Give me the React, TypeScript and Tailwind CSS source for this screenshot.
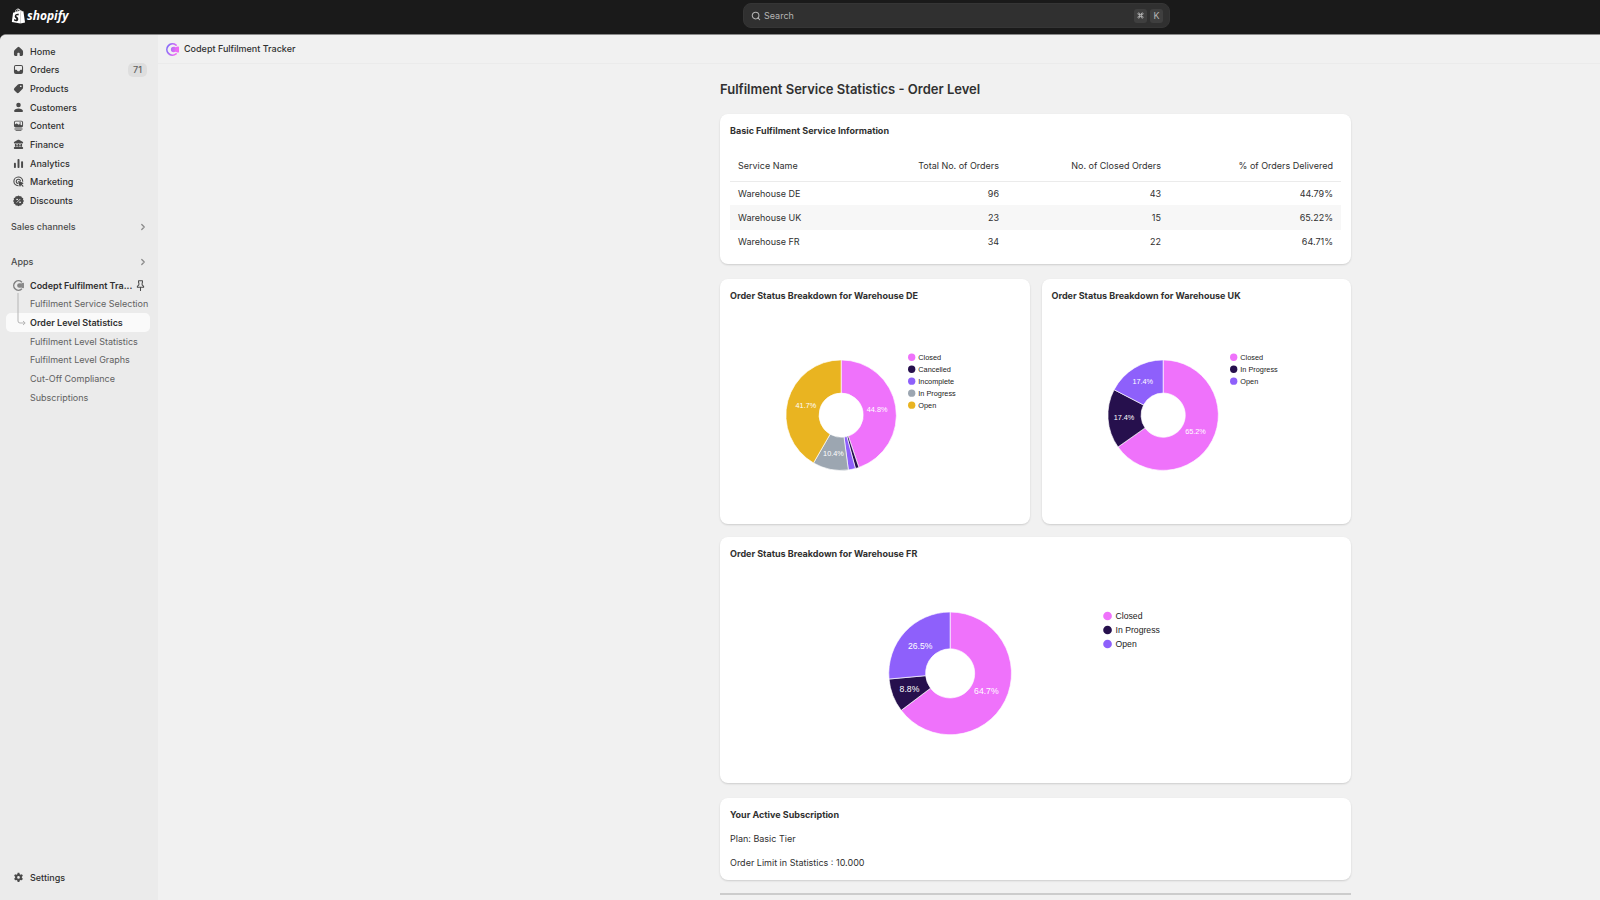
import type { ReactNode } from "react";
import { ChevronRight, Command, Search } from "lucide-react";
import { SiShopify } from "react-icons/si";

type Slice = { label: string; value: number; color: string };

const PINK = "#ef72fb";
const DARK = "#26104d";
const PURPLE = "#8e60fb";
const GREY = "#9ca6b1";
const YELLOW = "#e9b421";

const warehouses = [
  { name: "Warehouse DE", total: 96, closed: 43, delivered: "44.79%" },
  { name: "Warehouse UK", total: 23, closed: 15, delivered: "65.22%" },
  { name: "Warehouse FR", total: 34, closed: 22, delivered: "64.71%" },
];

const deSlices: Slice[] = [
  { label: "Closed", value: 43, color: PINK },
  { label: "Cancelled", value: 1, color: DARK },
  { label: "Incomplete", value: 2, color: PURPLE },
  { label: "In Progress", value: 10, color: GREY },
  { label: "Open", value: 40, color: YELLOW },
];

const ukSlices: Slice[] = [
  { label: "Closed", value: 15, color: PINK },
  { label: "In Progress", value: 4, color: DARK },
  { label: "Open", value: 4, color: PURPLE },
];

const frSlices: Slice[] = [
  { label: "Closed", value: 22, color: PINK },
  { label: "In Progress", value: 3, color: DARK },
  { label: "Open", value: 9, color: PURPLE },
];

function Glyph({ children }: { children: ReactNode }) {
  return (
    <svg
      viewBox="0 0 20 20"
      className="h-[13px] w-[13px] shrink-0 text-[#4a4a4a]"
      fill="currentColor"
      fillRule="evenodd"
      aria-hidden="true"
    >
      {children}
    </svg>
  );
}

const navItems = [
  {
    label: "Home",
    icon: (
      <path d="M8.600 3.400a2 2 0 0 1 2.800 0l4.500 4.300c.7.7 1.100 1.600 1.100 2.600v4.400c0 1.200-.9 2.100-2.100 2.100h-2.200a.9.9 0 0 1-.9-.9v-2.700c0-.7-.5-1.200-1.200-1.200h-1.200c-.7 0-1.200.5-1.200 1.200v2.700a.9.9 0 0 1-.9.9h-2.200c-1.200 0-2.100-.9-2.100-2.100v-4.400c0-1 .4-1.900 1.100-2.600z" />
    ),
  },
  {
    label: "Orders",
    badge: "71",
    icon: (
      <path d="M6 3h8a3 3 0 0 1 3 3v8a3 3 0 0 1-3 3H6a3 3 0 0 1-3-3V6a3 3 0 0 1 3-3zm.2 1.600c-1 0-1.600.6-1.600 1.600v4.300h2c.6 0 1 .3 1.200.8l.3.700c.2.4.5.6.9.6h2c.4 0 .7-.2.9-.6l.3-.7c.2-.5.6-.8 1.200-.8h2V6.200c0-1-.6-1.600-1.600-1.600z" />
    ),
  },
  {
    label: "Products",
    icon: (
      <path d="M11.200 3h4.300c.9 0 1.500.6 1.500 1.500v4.300c0 .8-.3 1.500-.9 2.100l-5.300 5.300a2.700 2.700 0 0 1-3.800 0l-3.200-3.200a2.700 2.700 0 0 1 0-3.800l5.300-5.300c.6-.6 1.300-.9 2.100-.9zM13.500 7.800a1.300 1.300 0 1 0 0-2.600 1.300 1.300 0 0 0 0 2.600z" />
    ),
  },
  {
    label: "Customers",
    icon: (
      <>
        <circle cx="10" cy="6.200" r="3.500" />
        <path d="M10 11.500c3.700 0 6.800 1.700 6.800 4 0 .9-.6 1.500-1.500 1.500H4.700c-.9 0-1.500-.6-1.500-1.500 0-2.300 3.100-4 6.800-4z" />
      </>
    ),
  },
  {
    label: "Content",
    icon: (
      <>
        <path d="M5.500 2.500h9A2.500 2.500 0 0 1 17 5v5.500a2.500 2.500 0 0 1-2.500 2.500h-9A2.500 2.500 0 0 1 3 10.500V5a2.500 2.500 0 0 1 2.500-2.500zm0 1.500c-.6 0-1 .4-1 1v3.500l2-1.500c.4-.3.8-.3 1.200 0l2.500 2 1.300-1c.4-.3.8-.3 1.200 0l2.800 2V5c0-.6-.4-1-1-1z" />
        <circle cx="12.500" cy="6.200" r="1.200" />
        <path d="M3.800 14.500h12.400V16H3.800zM5.500 16.800h9V18h-9z" />
      </>
    ),
  },
  {
    label: "Finance",
    icon: (
      <path d="M9.200 2.800a1.700 1.700 0 0 1 1.600 0l5.500 2.900c.6.300.9.800.9 1.400 0 .8-.6 1.400-1.400 1.400H4.200c-.8 0-1.400-.6-1.400-1.400 0-.6.300-1.100.9-1.400zM4.500 9.200h2.200v4.300H4.500zm4.400 0h2.200v4.300H8.900zm4.400 0h2.200v4.300h-2.200zM7 10.200h1.500V13H7zm4.500 0H13V13h-1.500zM4 14h12c.7 0 1.200.6 1.200 1.500S16.700 17 16 17H4c-.7 0-1.200-.6-1.200-1.500S3.300 14 4 14z" />
    ),
  },
  {
    label: "Analytics",
    icon: (
      <>
        <rect x="3" y="9" width="3" height="8" rx="1.200" />
        <rect x="8.500" y="3" width="3" height="14" rx="1.200" />
        <rect x="14" y="6.500" width="3" height="10.500" rx="1.200" />
      </>
    ),
  },
  {
    label: "Marketing",
    icon: (
      <>
        <path
          d="M16.500 9.500A6.800 6.800 0 1 0 9.500 16.600M13 9.200a3.300 3.300 0 1 0-3.800 3.900"
          fill="none"
          stroke="currentColor"
          strokeWidth="1.700"
          strokeLinecap="round"
        />
        <path d="M9.500 10.300c-.2-.6.3-1.100.9-.9l6.600 2.400c.7.300.7 1.200.1 1.500l-1.900.9 2.200 2.200c.8.900-.5 2.100-1.300 1.300L13.900 15.500l-.9 1.800c-.3.700-1.200.6-1.500-.1z" />
      </>
    ),
  },
  {
    label: "Discounts",
    icon: (
      <>
        <path d="M10 2.200l1.900 1.400 2.300-.3.900 2.200 2.200.9-.3 2.300L18.400 10.600 17 12.500l.3 2.200-2.200.9-.9 2.200-2.300-.3L10 18.800l-1.900-1.300-2.300.3-.9-2.200-2.200-.9.300-2.200-1.400-1.900L3 8.700l-.3-2.300 2.200-.9.9-2.200 2.300.3z" />
        <g stroke="#ebebeb" fill="none" strokeWidth="1.300" strokeLinecap="round">
          <path d="M7.600 12.900l4.800-4.800" />
          <circle cx="7.800" cy="8.300" r="0.700" />
          <circle cx="12.200" cy="12.700" r="0.700" />
        </g>
      </>
    ),
  },
];

const appPages = [
  "Fulfilment Service Selection",
  "Order Level Statistics",
  "Fulfilment Level Statistics",
  "Fulfilment Level Graphs",
  "Cut-Off Compliance",
  "Subscriptions",
];

function CodeptMark({ id, from, to, className }: { id: string; from: string; to: string; className: string }) {
  return (
    <svg viewBox="0 0 20 20" className={className} aria-hidden="true">
      <defs>
        <linearGradient id={id} x1="0" y1="0" x2="20" y2="6" gradientUnits="userSpaceOnUse">
          <stop offset="0.200" stopColor={from} />
          <stop offset="0.900" stopColor={to} />
        </linearGradient>
      </defs>
      <path
        d="M15.500 3.400A8.600 8.600 0 1 0 15.500 16.600"
        fill="none"
        stroke={`url(#${id})`}
        strokeWidth="2.600"
        strokeLinecap="round"
      />
      <path
        d="M19 5.200c.6 0 1 .4 1 1v7.600c0 .6-.4 1-1 1-1.900 0-3-.5-4.100-1.300-1.200.5-2.100.7-3.200.7a4.200 4.200 0 0 1 0-8.400c1.100 0 2 .2 3.200.7 1.100-.8 2.200-1.300 4.100-1.300z"
        fill={`url(#${id})`}
      />
    </svg>
  );
}

function Sidebar() {
  return (
    <aside className="flex w-[158px] shrink-0 flex-col rounded-tl-md bg-[#ebebeb] pb-[13px] pl-1.5 pr-2 pt-[7px] text-[9px] text-[#303030]">
      <nav className="grid h-[168px] auto-rows-fr">
        {navItems.map((item) => (
          <a key={item.label} href="#" className="flex items-center pl-1.5 pr-[3px] font-medium">
            <Glyph>{item.icon}</Glyph>
            <span className="ml-[5px] flex-1">{item.label}</span>
            {item.badge && (
              <span className="rounded-[5px] bg-[#dedede] px-[5px] leading-[14px] text-[#616161]">
                {item.badge}
              </span>
            )}
          </a>
        ))}
      </nav>

      <button type="button" className="mt-2 flex h-[18px] items-center justify-between pl-[5px] pr-0.5 font-medium text-[#4a4a4a]">
        Sales channels
        <ChevronRight className="h-[10px] w-[10px] text-[#8a8a8a]" strokeWidth={3} />
      </button>
      <button type="button" className="mt-[17px] flex h-[18px] items-center justify-between pl-[5px] pr-0.5 font-medium text-[#4a4a4a]">
        Apps
        <ChevronRight className="h-[10px] w-[10px] text-[#8a8a8a]" strokeWidth={3} />
      </button>

      <nav className="relative mt-[5px] grid h-[131px] auto-rows-fr">
        <a href="#" className="flex items-center pl-[7px] pr-[3px] font-semibold">
          <CodeptMark id="mark-side" from="#7c7c7c" to="#8a8a8a" className="h-[11px] w-[11px] shrink-0" />
          <span className="ml-1.5 flex-1 whitespace-nowrap">Codept Fulfilment Tra...</span>
          <svg
            viewBox="0 0 20 20"
            className="h-[13px] w-[13px] shrink-0"
            fill="none"
            stroke="#4a4a4a"
            strokeWidth="1.600"
            strokeLinejoin="round"
            strokeLinecap="round"
            aria-label="Pinned"
          >
            <path d="M7 2.800h6v2.500l-.5 1v2.700l2.300 2.200v1.600H5.200v-1.600l2.300-2.200V6.300l-.5-1zM10 13v4.500" />
          </svg>
        </a>
        {appPages.map((page) => {
          const active = page === "Order Level Statistics";
          return (
            <a
              key={page}
              href="#"
              aria-current={active ? "page" : undefined}
              className={
                active
                  ? "flex items-center rounded-[5px] bg-[#fafafa] pl-6 font-semibold"
                  : "flex items-center whitespace-nowrap pl-6 text-[#616161]"
              }
            >
              {page}
            </a>
          );
        })}
        {/* branch line from the app icon to the open page */}
        <svg
          viewBox="0 0 10 36"
          className="pointer-events-none absolute left-[11px] top-[16px] h-[36px] w-[10px]"
          fill="none"
          stroke="#b5b5b5"
          aria-hidden="true"
        >
          <path d="M1 1v28a2 2 0 0 0 2 2h5M6 29l2.200 2L6 33" />
        </svg>
      </nav>

      <a href="#" className="mt-auto flex h-[19px] items-center pl-1.5 font-medium">
        <Glyph>
          <path d="M8.700 2.800h2.600l.6 2.100 1.300.7 2.100-.5 1.400 2.300-1.500 1.600v1.500l1.500 1.600-1.400 2.300-2.100-.5-1.300.8-.6 2.100H8.700l-.6-2.100-1.300-.8-2.100.5-1.400-2.300 1.500-1.600V9L3.300 7.400l1.400-2.300 2.100.5 1.300-.7zM10 12a2.100 2.100 0 1 0 0-4.200 2.100 2.100 0 0 0 0 4.200z" />
        </Glyph>
        <span className="ml-[5px]">Settings</span>
      </a>
    </aside>
  );
}

function Card({ title, children }: { title: string; children: ReactNode }) {
  return (
    <section className="min-w-0 rounded-lg bg-white p-[10px] shadow-[0_1px_2px_rgba(0,0,0,0.15)]">
      <h2 className="text-[9px] font-bold leading-[14px]">{title}</h2>
      {children}
    </section>
  );
}

type DonutProps = {
  slices: Slice[];
  width: number;
  cx: number;
  radius: number;
  fontSize: number;
  legendX: number;
  legendY: number;
};

function Donut({ slices, width, cx, radius, fontSize, legendX, legendY }: DonutProps) {
  const cy = 161;
  const inner = radius * 0.4;
  const total = slices.reduce((sum, s) => sum + s.value, 0);
  const point = (r: number, turn: number) => {
    const a = turn * Math.PI * 2;
    return [cx + r * Math.sin(a), cy - r * Math.cos(a)];
  };

  let start = 0;
  const arcs = slices.map((s) => {
    const from = start;
    const share = s.value / total;
    const to = from + share;
    start = to;
    const large = share > 0.5 ? 1 : 0;
    const d = [
      `M${point(radius, from)}`,
      `A${radius} ${radius} 0 ${large} 1 ${point(radius, to)}`,
      `L${point(inner, to)}`,
      `A${inner} ${inner} 0 ${large} 0 ${point(inner, from)}Z`,
    ].join("");
    // narrow slices get their label further out, where there is more room
    const labelRadius = radius * (share < 0.2 ? 0.71 : 0.66);
    return { ...s, d, share, mid: point(labelRadius, (from + to) / 2) };
  });

  const step = fontSize + (fontSize > 12 ? 8 : 7);

  return (
    <svg
      viewBox={`0 0 ${width} 310`}
      className="mt-[5px] block w-full"
      fontFamily='"Liberation Sans", Arial, sans-serif'
      fontSize={fontSize}
      role="img"
      aria-label="Order status breakdown"
    >
      {arcs.map((a) => (
        <path key={a.label} d={a.d} fill={a.color} stroke="#fff" strokeWidth="1" />
      ))}
      {arcs
        .filter((a) => a.share > 0.05)
        .map((a) => (
          <text key={a.label} x={a.mid[0]} y={a.mid[1] + fontSize * 0.35} textAnchor="middle" fill="#fff">
            {(a.share * 100).toFixed(1)}%
          </text>
        ))}
      {slices.map((s, i) => (
        <g key={s.label}>
          <circle cx={legendX} cy={legendY + i * step} r={fontSize / 2} fill={s.color} />
          <text x={legendX + fontSize - 1} y={legendY + i * step + fontSize * 0.35} fill="#222">
            {s.label}
          </text>
        </g>
      ))}
    </svg>
  );
}

export default function App() {
  return (
    <div className="flex min-h-screen flex-col bg-[#1a1a1a] font-['Inter',sans-serif] text-[#303030]">
      <header className="flex h-[34px] shrink-0 items-start">
        <a href="#" className="flex w-[743px] items-center pl-[11px] pt-2 text-white" aria-label="Shopify">
          <SiShopify className="h-4 w-[15px]" />
          <span className="ml-px font-['Open_Sans',sans-serif] text-[12px] font-bold italic leading-4">shopify</span>
        </a>
        <div className="mt-[3px] flex h-[25px] w-full max-w-[427px] items-center rounded-lg border border-[#353535] bg-[#303030] pl-[7px] pr-[6px] text-[#b5b5b5]">
          <Search className="h-[10px] w-[10px]" strokeWidth={2.5} />
          <input
            type="search"
            aria-label="Search"
            placeholder="Search"
            className="ml-[3px] min-w-0 flex-1 bg-transparent text-[9px] outline-none placeholder:text-[#b5b5b5]"
          />
          <kbd className="flex h-[14px] w-[13px] items-center justify-center rounded-[3px] bg-[#3f3f3f]">
            <Command className="h-[7px] w-[7px]" strokeWidth={3} />
          </kbd>
          <kbd className="ml-[3px] flex h-[14px] w-[13px] items-center justify-center rounded-[3px] bg-[#3f3f3f] font-['Inter',sans-serif] text-[9px]">
            K
          </kbd>
        </div>
      </header>

      <div className="flex flex-1 rounded-tl-md border-t border-[#8a8a8a] bg-[#f1f1f1]">
        <Sidebar />

        <div className="min-w-0 flex-1">
          <div className="flex h-[29px] items-center border-b border-[#ebebeb] pl-2">
            <CodeptMark id="mark-top" from="#8a6cf8" to="#ee6cf5" className="h-[13px] w-[13px]" />
            <span className="ml-[5px] text-[9px] font-medium">Codept Fulfilment Tracker</span>
          </div>

          <main className="ml-[562px] mr-5 max-w-[631px]">
            <h1 className="pt-[15px] text-[13px] font-semibold leading-5">Fulfilment Service Statistics - Order Level</h1>

            <div className="mt-[15px] flex flex-col">
              <Card title="Basic Fulfilment Service Information">
                <table className="mt-[13px] w-full table-fixed text-[9px]">
                  <thead>
                    <tr className="h-[30px] border-b border-[#ebebeb]">
                      <th className="w-[115px] px-2 text-left font-normal">Service Name</th>
                      <th className="w-[162px] px-2 text-right font-normal">Total No. of Orders</th>
                      <th className="w-[162px] px-2 text-right font-normal">No. of Closed Orders</th>
                      <th className="w-[172px] px-2 text-right font-normal">% of Orders Delivered</th>
                    </tr>
                  </thead>
                  <tbody>
                    {warehouses.map((w) => (
                      <tr key={w.name} className="h-[24px] even:h-[25px] even:bg-[#f7f7f7]">
                        <td className="px-2">{w.name}</td>
                        <td className="px-2 text-right">{w.total}</td>
                        <td className="px-2 text-right">{w.closed}</td>
                        <td className="px-2 text-right">{w.delivered}</td>
                      </tr>
                    ))}
                  </tbody>
                </table>
              </Card>

              <div className="mt-[15px] grid grid-cols-2 gap-3">
                <Card title="Order Status Breakdown for Warehouse DE">
                  <Donut slices={deSlices} width={435} cx={167} radius={83} fontSize={11} legendX={273} legendY={74} />
                </Card>
                <Card title="Order Status Breakdown for Warehouse UK">
                  <Donut slices={ukSlices} width={435} cx={167} radius={83} fontSize={11} legendX={273} legendY={74} />
                </Card>
              </div>

              <div className="mt-[13px]">
                <Card title="Order Status Breakdown for Warehouse FR">
                  <Donut slices={frSlices} width={916} cx={330} radius={92} fontSize={13} legendX={566} legendY={75} />
                </Card>
              </div>

              <div className="mt-[15px]">
                <Card title="Your Active Subscription">
                  <p className="mt-[10px] text-[9px] leading-[14px]">Plan: Basic Tier</p>
                  <p className="mt-[10px] text-[9px] leading-[14px]">Order Limit in Statistics : 10.000</p>
                </Card>
              </div>

              <hr className="mt-[13px] border-t-2 border-[#cccccc]" />
            </div>
          </main>
        </div>
      </div>
    </div>
  );
}
